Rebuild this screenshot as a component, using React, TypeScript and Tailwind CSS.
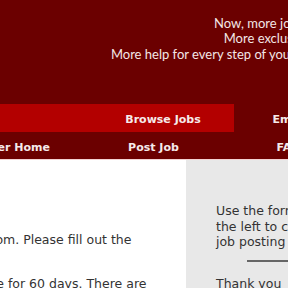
import React from "react";

const body = { fontFamily: '"DejaVu Sans", Verdana, sans-serif' };
const head = { fontFamily: 'Lato, "Open Sans", sans-serif' };

const App: React.FC = () => {
    return (
        <div className="w-[288px] h-[288px] overflow-hidden bg-white">
            <div className="w-[760px] -ml-[200px]" style={body}>
                {/* header */}
                <div className="h-[104px] bg-[#6b0000] pt-[16px] pr-[224px] text-right text-[13px] leading-[15.4px] text-[#f3e6e6]" style={head}>
                    <p>Now, more jobs daily.</p>
                    <p>More exclusive jobs</p>
                    <p>More help for every step of your career.</p>
                </div>

                {/* main tabs */}
                <div className="flex h-[28px] bg-[#6b0000] text-[11px] font-bold text-[#f5eaea]">
                    <div className="flex w-[434px] bg-[#b30000]">
                        <div className="w-[292px] flex items-center justify-center pt-[5px]">Job Seekers</div>
                        <div className="w-[142px] flex items-center justify-center pt-[5px]">Browse Jobs</div>
                    </div>
                    <div className="w-[142px] flex items-center justify-center pt-[5px]">Employers</div>
                </div>

                {/* sub tabs */}
                <div className="flex h-[28px] bg-[#6b0000] text-[11px] font-bold text-[#f5eaea] border-b border-[#f3d3d3]">
                    <div className="w-[286px] flex items-center justify-end pr-[36px] pt-[6px]">Employer Home</div>
                    <div className="w-[135px] flex items-center justify-center pt-[6px]">Post Job</div>
                    <div className="w-[135px] flex items-center justify-center pt-[6px]">FAQ</div>
                </div>

                {/* content */}
                <div className="flex text-[12.5px] leading-[15.5px] text-[#333]">
                    <div className="w-[386px] pt-[72px]">
                        <div className="-ml-[71px]">
                            <p className="whitespace-nowrap">Welcome to the job posting form for Jobs.com. Please fill out the</p>
                            <p className="mt-[28px] whitespace-nowrap">Every job that you post here will stay active for 60 days. There are</p>
                        </div>
                    </div>
                    <div className="flex-1 bg-[#e8e8e8] pl-[30px] pt-[43px]">
                        <p>Use the form on</p>
                        <p>the left to create your</p>
                        <p>job posting</p>
                        <div className="ml-[31px] mt-[10px] w-[100px] h-[2px] bg-[#666]" />
                        <p className="mt-[14px]">Thank you</p>
                    </div>
                </div>
            </div>
        </div>
    );
};

export default App;
